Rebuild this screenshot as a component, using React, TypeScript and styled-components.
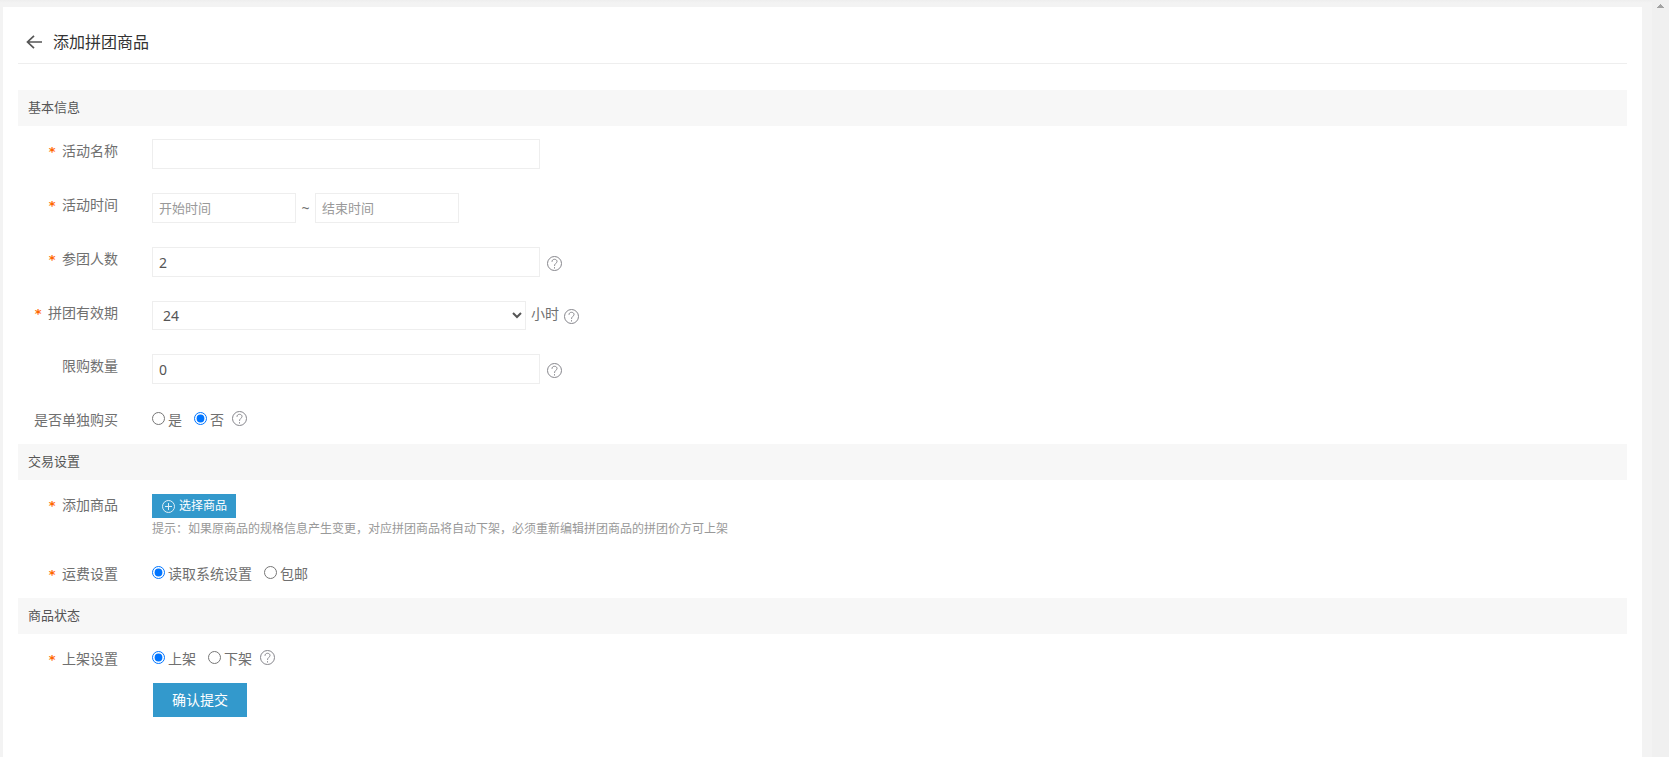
import React from "react";
import styled, { createGlobalStyle } from "styled-components";

const GlobalStyle = createGlobalStyle`
  * { box-sizing: border-box; }
  body {
    margin: 0;
    background: #f3f3f3;
    color: #707070;
    font-family: "Noto Sans", "Noto Sans CJK SC", sans-serif;
    font-size: 14px;
    line-height: 24px;
  }
  input, select, button { font: inherit; margin: 0; }
`;

const Page = styled.div`
  display: grid;
  grid-template-columns: minmax(0, 1fr) 17px;
  min-height: 100vh;
`;

const Main = styled.main`
  display: flex;
  padding: 7px 10px 0 3px;
  background: linear-gradient(#eeeeee, #f3f3f3 3px);
`;

const Card = styled.form`
  flex: 1;
  min-width: 0;
  padding: 15px 15px 40px;
  background: #fff;
`;

const ScrollTrack = styled.div`
  display: flex;
  justify-content: center;
  padding-top: 4px;
  background: #f0f0f0;
`;

const Header = styled.header`
  display: flex;
  align-items: center;
  gap: 10px;
  height: 42px;
  padding: 0 8px 1px;
  border-bottom: 1px solid #eee;
  margin-bottom: 26px;
`;

const Title = styled.h1`
  margin: 0;
  color: #333;
  font-size: 16px;
  font-weight: 400;
  line-height: 24px;
`;

const BackLink = styled.a`
  display: flex;
  color: #555;
`;

const Section = styled.section``;

const SectionTitle = styled.h2`
  margin: 0 0 13px;
  padding: 0 10px 2px;
  background: #f7f7f7;
  color: #555;
  font-size: 13px;
  font-weight: 400;
  line-height: 34px;
`;

const Row = styled.div<{ $space?: number }>`
  display: grid;
  grid-template-columns: 100px minmax(0, 1fr);
  column-gap: 34px;
  padding-bottom: ${(p) => p.$space ?? 24}px;
`;

const RowLabel = styled.label`
  text-align: right;
  white-space: nowrap;
`;

const Star = styled.span`
  margin-right: 6px;
  color: #ff6600;
  font-family: "DejaVu Sans Mono", monospace;
  font-size: 13px;
  font-weight: 700;
  line-height: 1;
`;

const Field = styled.div<{ $gap?: number }>`
  display: flex;
  align-items: center;
  gap: ${(p) => p.$gap ?? 7}px;
`;

const TextInput = styled.input<{ $short?: boolean }>`
  width: ${(p) => (p.$short ? 144 : 388)}px;
  height: 30px;
  padding: ${(p) => (p.$short ? "0 6px 2px" : "0 6px")};
  border: 1px solid #eee;
  background: #fff;
  color: #555;
  outline: 0;
  &::placeholder { color: #999; font-size: 13px; }
`;

const Tilde = styled.span`
  width: 9px;
  text-align: center;
`;

const Unit = styled.span`
  padding-bottom: 3px;
`;

const Select = styled.select`
  width: 374px;
  height: 29px;
  padding: 0 0 0 6px;
  border: 1px solid #eee;
  border-radius: 0;
  background: #fff;
  color: #555;
`;

const HelpButton = styled.button`
  display: flex;
  padding: 2px 0 0;
  border: 0;
  background: none;
  color: #86868c;
`;

const Choices = styled.div`
  display: flex;
  align-items: flex-start;
  gap: 12px;
`;

const Choice = styled.label`
  display: flex;
  align-items: flex-start;
  gap: 3px;
`;

const Radio = styled.input`
  width: 13px;
  height: 13px;
  && { margin-top: 4px; }
`;

const ChoiceHelp = styled.div`
  padding-top: 1px;
  margin-left: -4px;
`;

const Stack = styled.div`
  display: flex;
  flex-direction: column;
  align-items: flex-start;
  padding-top: 1px;
`;

const PickButton = styled.button`
  display: flex;
  align-items: center;
  gap: 4px;
  height: 24px;
  padding: 0 9px 0 10px;
  border: 0;
  background: #3399cc;
  color: #fff;
  font-size: 12px;
`;

const Hint = styled.p`
  margin: 0;
  color: #999;
  font-size: 12px;
  line-height: 22px;
`;

const SubmitButton = styled.button`
  display: block;
  height: 34px;
  margin-left: 135px;
  padding: 0 19px;
  border: 0;
  background: #3399cc;
  color: #fff;
`;

const Help = () => (
  <HelpButton type="button" aria-label="帮助">
    <svg width="15" height="15" viewBox="0 0 15 15" fill="none" stroke="currentColor">
      <circle cx="7.5" cy="7.5" r="7" />
      <path d="M5 5.8C5 4.2 6 3.3 7.5 3.3S10 4.2 10 5.5C10 7.3 7.5 7.4 7.5 9.9M7.5 11.2v1.3" />
    </svg>
  </HelpButton>
);

type LabelProps = { htmlFor?: string; id?: string; required?: boolean; children: string };

const Label = ({ htmlFor, id, required, children }: LabelProps) => (
  <RowLabel as={htmlFor ? "label" : "span"} htmlFor={htmlFor} id={id}>
    {required && <Star>*</Star>}
    {children}
  </RowLabel>
);

type RadioRowProps = {
  name: string;
  label: string;
  options: string[];
  selected: string;
  required?: boolean;
  help?: boolean;
};

const RadioRow = ({ name, label, options, selected, required, help }: RadioRowProps) => (
  <Row $space={12}>
    <Label id={`${name}-label`} required={required}>{label}</Label>
    <Choices role="radiogroup" aria-labelledby={`${name}-label`}>
      {options.map((option) => (
        <Choice key={option}>
          <Radio type="radio" name={name} value={option} defaultChecked={option === selected} />
          {option}
        </Choice>
      ))}
      {help && <ChoiceHelp><Help /></ChoiceHelp>}
    </Choices>
  </Row>
);

export default function App() {
  return (
    <>
      <GlobalStyle />
      <Page>
        <Main>
          <Card onSubmit={(e) => e.preventDefault()}>
            <Header>
              <BackLink href="#" aria-label="返回">
                <svg width="17" height="14" viewBox="0 0 17 14" fill="none" stroke="currentColor" strokeWidth="1.7">
                  <path d="M16 7H1.5M8 .8 1.5 7 8 13.2" />
                </svg>
              </BackLink>
              <Title>添加拼团商品</Title>
            </Header>

            <Section>
              <SectionTitle>基本信息</SectionTitle>
              <Row>
                <Label htmlFor="name" required>活动名称</Label>
                <Field><TextInput id="name" /></Field>
              </Row>
              <Row>
                <Label htmlFor="start" required>活动时间</Label>
                <Field $gap={5}>
                  <TextInput id="start" $short placeholder="开始时间" />
                  <Tilde>~</Tilde>
                  <TextInput $short placeholder="结束时间" aria-label="结束时间" />
                </Field>
              </Row>
              <Row>
                <Label htmlFor="people" required>参团人数</Label>
                <Field><TextInput id="people" defaultValue="2" /><Help /></Field>
              </Row>
              <Row>
                <Label htmlFor="hours" required>拼团有效期</Label>
                <Field $gap={5}>
                  <Select id="hours" defaultValue="24">
                    <option>12</option>
                    <option>24</option>
                    <option>48</option>
                  </Select>
                  <Unit>小时</Unit>
                  <Help />
                </Field>
              </Row>
              <Row>
                <Label htmlFor="limit">限购数量</Label>
                <Field><TextInput id="limit" defaultValue="0" /><Help /></Field>
              </Row>
              <RadioRow name="single" label="是否单独购买" options={["是", "否"]} selected="否" help />
            </Section>

            <Section>
              <SectionTitle>交易设置</SectionTitle>
              <Row $space={22}>
                <Label htmlFor="pick" required>添加商品</Label>
                <Stack>
                  <PickButton type="button" id="pick">
                    <svg width="13" height="13" viewBox="0 0 13 13" fill="none" stroke="currentColor" opacity=".85">
                      <circle cx="6.5" cy="6.5" r="6" />
                      <path d="M6.5 3v7M3 6.5h7" />
                    </svg>
                    选择商品
                  </PickButton>
                  <Hint>提示：如果原商品的规格信息产生变更，对应拼团商品将自动下架，必须重新编辑拼团商品的拼团价方可上架</Hint>
                </Stack>
              </Row>
              <RadioRow name="freight" label="运费设置" options={["读取系统设置", "包邮"]} selected="读取系统设置" required />
            </Section>

            <Section>
              <SectionTitle>商品状态</SectionTitle>
              <RadioRow name="status" label="上架设置" options={["上架", "下架"]} selected="上架" required help />
            </Section>
            <SubmitButton type="submit">确认提交</SubmitButton>
          </Card>
        </Main>
        <ScrollTrack aria-hidden="true">
          <svg width="7" height="4" viewBox="0 0 7 4" fill="#a3a3a3" shapeRendering="crispEdges">
            <path d="M3 0h1v1h1v1h1v1h1v1H0V3h1V2h1V1h1z" />
          </svg>
        </ScrollTrack>
      </Page>
    </>
  );
}
